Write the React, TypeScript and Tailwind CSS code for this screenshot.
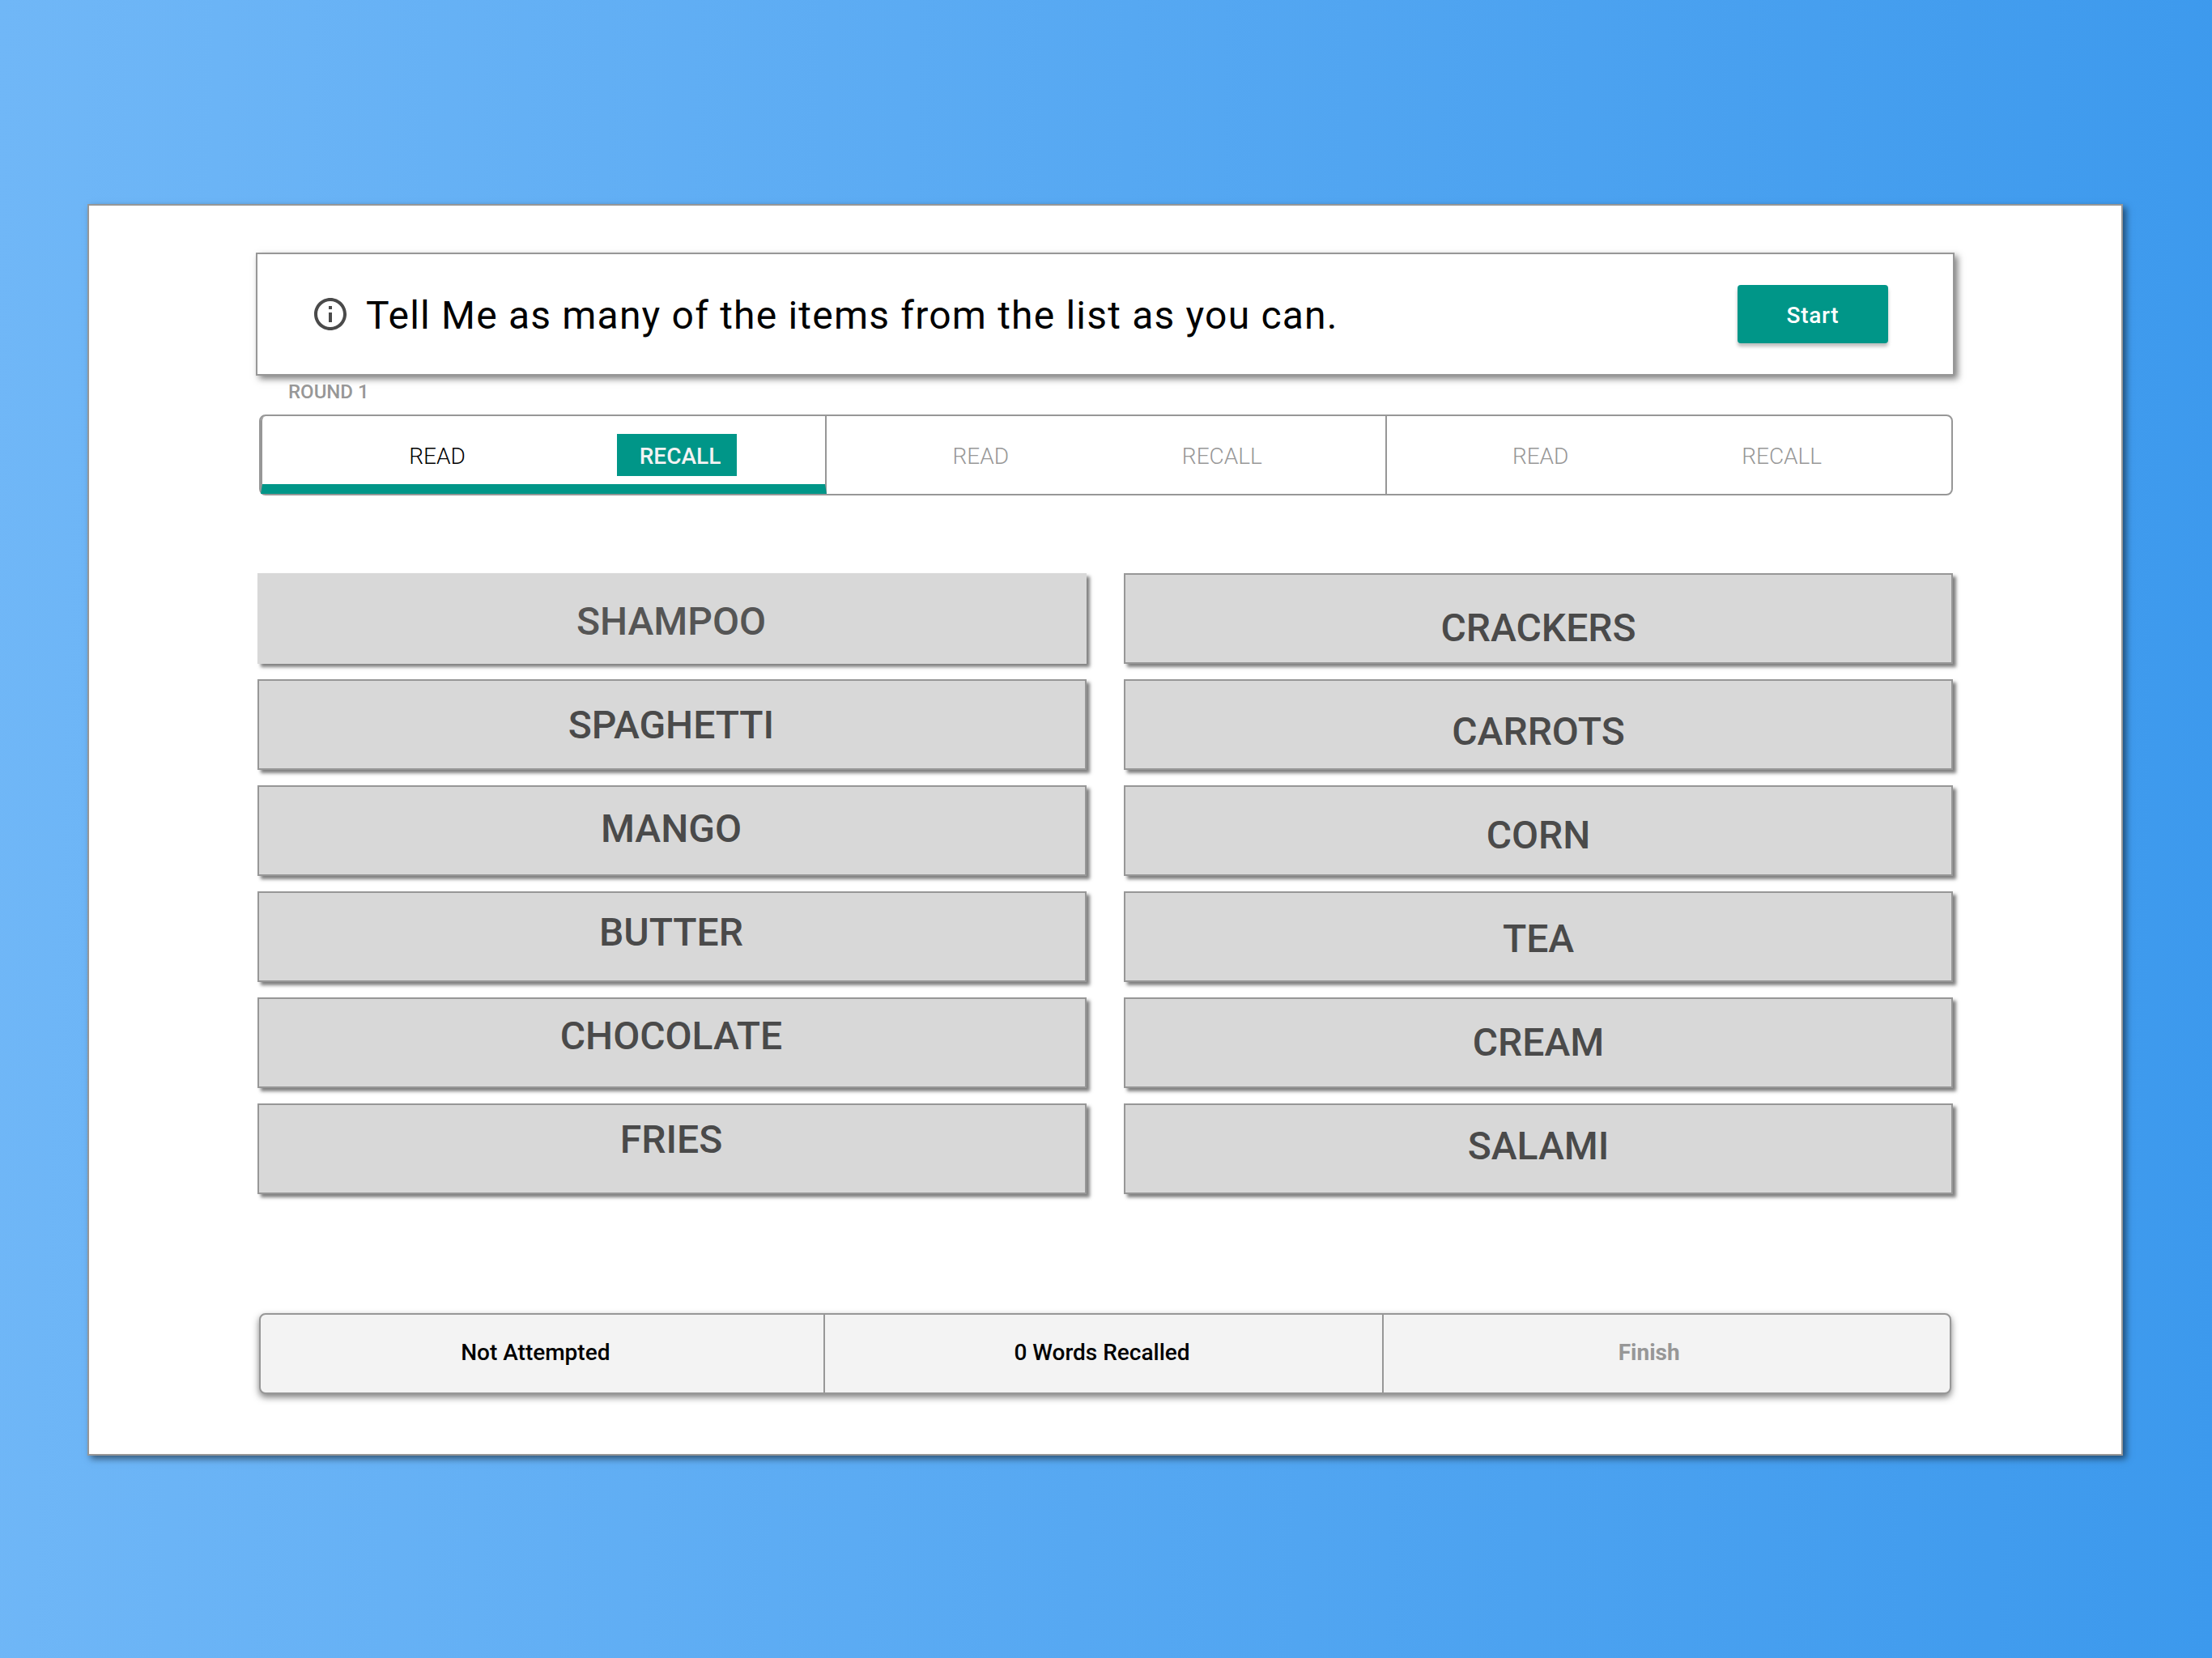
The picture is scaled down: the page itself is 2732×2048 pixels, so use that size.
const WORDS_LEFT = ["SHAMPOO", "SPAGHETTI", "MANGO", "BUTTER", "CHOCOLATE", "FRIES"];
const WORDS_RIGHT = ["CRACKERS", "CARROTS", "CORN", "TEA", "CREAM", "SALAMI"];

function InfoIcon() {
  return (
    <svg viewBox="0 0 24 24" className="size-12 shrink-0" fill="#4a4a4a" aria-hidden="true">
      <path d="M11 7h2v2h-2zm0 4h2v6h-2zm1-9C6.48 2 2 6.48 2 12s4.48 10 10 10 10-4.48 10-10S17.52 2 12 2zm0 18c-4.41 0-8-3.59-8-8s3.59-8 8-8 8 3.59 8 8-3.59 8-8 8z" />
    </svg>
  );
}

function Header() {
  return (
    <header className="flex h-38 items-center border-2 border-[#979797] bg-white pr-20 pl-[66px] shadow-[4px_4px_8px_rgba(0,0,0,0.5)]">
      <InfoIcon />
      <h1 className="ml-5 flex-1 pt-1 text-5xl font-normal tracking-wide text-black">
        Tell Me as many of the items from the list as you can.
      </h1>
      <button
        type="button"
        className="h-18 w-[186px] rounded-sm bg-[#009688] pt-1 text-[28px] font-medium tracking-wide text-white shadow-[0_4px_4px_rgba(0,0,0,0.26)]"
      >
        Start
      </button>
    </header>
  );
}

function Round({ active = false }: { active?: boolean }) {
  if (active) {
    return (
      <div className="flex items-center gap-[148px] rounded-tl-md border-r-2 border-b-12 border-l-2 border-r-[#979797] border-b-[#009688] border-l-[#979797] pt-3 pl-[142px]">
        <button type="button" className="h-13 w-37 pt-1 font-light text-black">
          READ
        </button>
        <button type="button" className="h-13 w-37 bg-[#009688] pt-1 pl-2 font-medium text-[#f3f3f3]">
          RECALL
        </button>
      </div>
    );
  }
  return (
    <div className="flex items-center gap-[150px] border-r-2 border-[#979797] pl-[116px] last:border-r-0">
      <button type="button" className="h-13 w-37 pt-1 font-light text-[#979797]">
        READ
      </button>
      <button type="button" className="h-13 w-37 pt-1 font-light text-[#979797]">
        RECALL
      </button>
    </div>
  );
}

function WordColumn({ words, className, plainFirst = false }: { words: string[]; className: string; plainFirst?: boolean }) {
  return (
    <div className="grid">
      <div className="col-start-1 row-start-1 flex flex-col gap-[19px]">
        {words.map((word, i) => (
          <button
            key={word}
            id={word}
            type="button"
            className={
              plainFirst && i === 0
                ? "h-28 bg-[#d8d8d8] shadow-[4px_4px_4px_rgba(0,0,0,0.5)]"
                : "h-28 border-2 border-[#979797] bg-[#d8d8d8] shadow-[4px_4px_4px_rgba(0,0,0,0.5)]"
            }
          />
        ))}
      </div>
      <div className={className}>
        {words.map((word, i) => (
          <label
            key={word}
            htmlFor={word}
            className={
              plainFirst && i === 0
                ? "h-32 text-center text-5xl leading-[128px] font-medium text-[#555555]"
                : "h-32 text-center text-5xl leading-[128px] font-medium text-[#4a4a4a]"
            }
          >
            {word}
          </label>
        ))}
      </div>
    </div>
  );
}

export default function App() {
  return (
    <div className="min-h-screen bg-linear-[92deg] from-[#70b7f7] to-[#3c99ed] pt-[252px] pr-[110px] pb-[250px] pl-[108px] font-['Roboto',sans-serif]">
      <main className="border-2 border-[#979797] bg-white px-[206px] pt-[58px] pb-[74px] shadow-[4px_4px_8px_rgba(0,0,0,0.5)]">
        <Header />
        <p className="pt-1 pl-10 text-2xl leading-8 font-medium text-[#979797]">ROUND 1</p>
        <nav
          aria-label="Rounds"
          className="mt-3 mr-0.5 ml-1 grid h-25 grid-cols-[700fr_692fr_698fr] rounded-lg border-2 border-[#979797] text-[28px]"
        >
          <Round active />
          <Round />
          <Round />
        </nav>
        <section aria-label="Words" className="mt-24 mr-0.5 ml-0.5 grid h-[766px] grid-cols-2 gap-[46px]">
          <WordColumn words={WORDS_LEFT} plainFirst className="col-start-1 row-start-1 -mt-1 flex flex-col pr-0.5" />
          <WordColumn words={WORDS_RIGHT} className="col-start-1 row-start-1 mt-1 flex flex-col" />
        </section>
        <footer className="mt-37 mr-1 ml-1 grid h-25 grid-cols-[698fr_692fr_700fr] rounded-lg border-2 border-[#979797] bg-[#f3f3f3] text-[28px] shadow-[0_4px_8px_rgba(0,0,0,0.5)]">
          <button type="button" className="border-r-2 border-[#979797] pr-4 pb-0.5 font-medium text-black">
            Not Attempted
          </button>
          <button type="button" className="border-r-2 border-[#979797] pr-1 pb-0.5 font-medium text-black">
            0 Words Recalled
          </button>
          <button type="button" className="pr-11 pb-0.5 font-bold text-[#979797]">
            Finish
          </button>
        </footer>
      </main>
    </div>
  );
}
